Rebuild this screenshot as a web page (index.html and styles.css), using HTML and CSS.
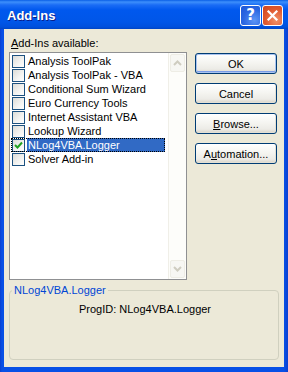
FILE: index.html
```html
<!DOCTYPE html>
<html lang="en">
<head>
  <meta charset="UTF-8">
  <title>Add-Ins</title>
  <link rel="stylesheet" href="styles.css">
</head>
<body>
  <div class="window">
    <div class="titlebar">
      <span class="title">Add-Ins</span>
      <div class="caption-buttons">
        <div class="cap-btn help">?</div>
        <div class="cap-btn close">
          <svg width="13" height="13" viewBox="0 0 13 13"><path d="M2.5 2.5 L10.5 10.5 M10.5 2.5 L2.5 10.5" stroke="#fff" stroke-width="2.2" stroke-linecap="square"/></svg>
        </div>
      </div>
    </div>

    <div class="client">
      <div class="label"><u>A</u>dd-Ins available:</div>

      <div class="main">
        <div class="listbox">
          <ul class="items">
            <li><span class="check"></span><span class="name">Analysis ToolPak</span></li>
            <li><span class="check"></span><span class="name">Analysis ToolPak - VBA</span></li>
            <li><span class="check"></span><span class="name">Conditional Sum Wizard</span></li>
            <li><span class="check"></span><span class="name">Euro Currency Tools</span></li>
            <li><span class="check"></span><span class="name">Internet Assistant VBA</span></li>
            <li><span class="check"></span><span class="name">Lookup Wizard</span></li>
            <li class="selected">
              <span class="check checked">
                <svg width="11" height="11" viewBox="0 0 11 11"><polyline points="2,5 4.5,7.5 9,2.5" fill="none" stroke="#21a121" stroke-width="2"/></svg>
              </span>
              <span class="name">NLog4VBA.Logger</span>
            </li>
            <li><span class="check"></span><span class="name">Solver Add-in</span></li>
          </ul>
          <div class="scrollbar">
            <div class="sb-btn">
              <svg width="9" height="6" viewBox="0 0 9 6"><polyline points="1,5 4.5,1.5 8,5" fill="none" stroke="#cfcdc0" stroke-width="2"/></svg>
            </div>
            <div class="sb-track"></div>
            <div class="sb-btn">
              <svg width="9" height="6" viewBox="0 0 9 6"><polyline points="1,1 4.5,4.5 8,1" fill="none" stroke="#cfcdc0" stroke-width="2"/></svg>
            </div>
          </div>
        </div>

        <div class="buttons">
          <div class="btn default">OK</div>
          <div class="btn">Cancel</div>
          <div class="btn"><u>B</u>rowse...</div>
          <div class="btn">A<u>u</u>tomation...</div>
        </div>
      </div>

      <fieldset class="groupbox">
        <legend>NLog4VBA.Logger</legend>
        <div class="progid">ProgID: NLog4VBA.Logger</div>
      </fieldset>
    </div>
  </div>
</body>
</html>
```

FILE: styles.css
```css
html, body {
  margin: 0;
  padding: 0;
  width: 288px;
  height: 372px;
  overflow: hidden;
  background: #0842d6;
}

body {
  font-family: 'Liberation Sans', Arial, sans-serif;
  font-size: 11px;
  color: #000;
}

.window {
  width: 288px;
  height: 372px;
  display: flex;
  flex-direction: column;
  background: linear-gradient(90deg, #0a3fd0 0px, #0850e6 2px, #0850e6 284px, #0a3fd0 288px);
}

/* title bar */
.titlebar {
  height: 29px;
  flex: none;
  display: flex;
  align-items: center;
  justify-content: space-between;
  padding: 0 5px 0 7px;
  background: linear-gradient(180deg, #0a5fe6 0px, #3d8ffb 2px, #1a6cf5 5px, #0058ee 10px, #0056e8 22px, #0050dc 27px, #0045c4 29px);
}

.title {
  font-weight: bold;
  font-size: 13px;
  color: #fff;
  text-shadow: 1px 1px 0 #0a1e8a;
  margin-top: 1px;
}

.caption-buttons {
  display: flex;
  gap: 1px;
  margin-top: 1px;
}

.cap-btn {
  width: 19px;
  height: 19px;
  border: 1px solid #fff;
  border-radius: 3px;
  display: flex;
  align-items: center;
  justify-content: center;
  box-sizing: content-box;
}

.help {
  background: radial-gradient(circle at 70% 75%, #5d95f5 0%, #2b67e2 55%, #1b55d6 100%);
  color: #fff;
  font-family: 'DejaVu Sans', sans-serif;
  font-weight: bold;
  font-size: 15px;
}

.close {
  background: radial-gradient(circle at 70% 75%, #f1926a 0%, #e05a30 55%, #cc4420 100%);
}

/* dialog body */
.client {
  flex: 1;
  margin: 0 4px 5px;
  background: #ece9d8;
  padding: 8px 6px 7px 5px;
  display: flex;
  flex-direction: column;
}

.label {
  margin-left: 2px;
  height: 13px;
  line-height: 13px;
  margin-bottom: 2px;
}

.main {
  display: flex;
  align-items: flex-start;
}

.listbox {
  width: 178px;
  height: 228px;
  box-sizing: border-box;
  border: 1px solid #8f9092;
  background: #fff;
  display: flex;
}

.items {
  list-style: none;
  margin: 0;
  padding: 1px 0 0;
  flex: 1;
}

.items li {
  position: relative;
  height: 14px;
  display: flex;
  align-items: center;
  margin: 0 3px 0 1px;
}

.check {
  width: 11px;
  height: 11px;
  margin-left: 1px;
  border: 1px solid #1c5180;
  background: linear-gradient(135deg, #dcdcd7 0%, #f4f4f2 60%, #ffffff 100%);
  display: flex;
  align-items: center;
  justify-content: center;
  flex: none;
}

.name {
  flex: 1;
  margin-left: 2px;
  padding-left: 1px;
  height: 14px;
  line-height: 14px;
  white-space: nowrap;
}

.selected .name {
  background: #316ac5;
  color: #fff;
}

.selected::after {
  content: '';
  position: absolute;
  inset: 0;
  border: 1px dotted #000;
}

.scrollbar {
  width: 17px;
  display: flex;
  flex-direction: column;
  background: #fdfdfa;
  border-left: 1px solid #f0efe8;
}

.sb-btn {
  height: 16px;
  margin: 1px 1px 0;
  border: 1px solid #eeede5;
  border-radius: 2px;
  background: #f7f7f3;
  display: flex;
  align-items: center;
  justify-content: center;
}

.sb-btn:last-child {
  margin: 0 1px 1px;
}

.sb-track {
  flex: 1;
}

.buttons {
  margin-left: 8px;
  margin-top: 1px;
  display: flex;
  flex-direction: column;
  gap: 9px;
}

.btn {
  width: 82px;
  height: 21px;
  box-sizing: border-box;
  border: 1px solid #003c74;
  border-radius: 3px;
  background: linear-gradient(180deg, #ffffff 0%, #f5f5f1 45%, #ecebe6 80%, #d8d2c6 100%);
  display: flex;
  align-items: center;
  justify-content: center;
  box-shadow: inset -1px -1px 0 #e3e0d4;
}

.btn.default {
  box-shadow: inset 0 0 0 1px #aac4ef, inset 0 -1px 0 1px #7a9ce6;
}

/* group box */
.groupbox {
  margin: 4px 0 0;
  padding: 0 0 0 2px;
  width: 270px;
  box-sizing: border-box;
  flex: 1;
  border: 1px solid #d0d0bf;
  border-radius: 4px;
  min-width: 0;
}

.groupbox legend {
  padding: 0 2px;
  color: #0046d5;
  line-height: 13px;
}

.progid {
  text-align: center;
  margin-top: 6px;
  line-height: 13px;
}
```
